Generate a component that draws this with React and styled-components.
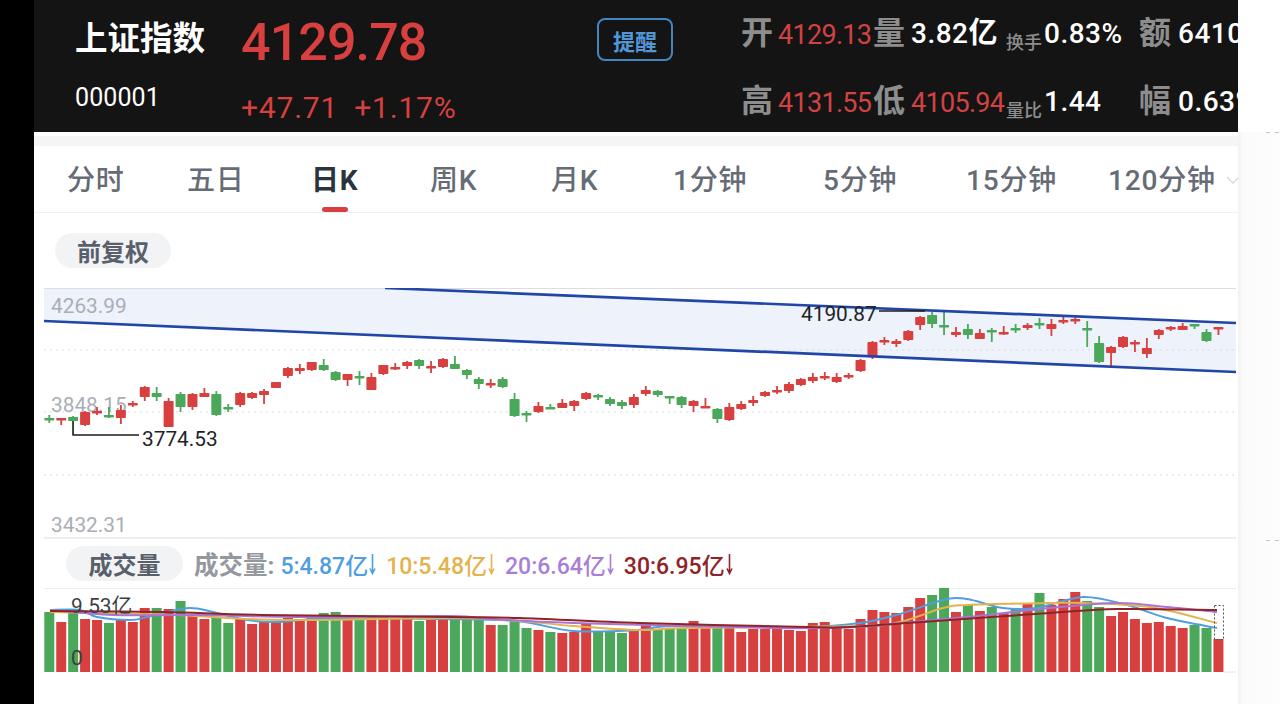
import React from "react";
import styled, { createGlobalStyle } from "styled-components";

const CJK = `Roboto, "Noto Sans CJK SC", sans-serif`;
const RED = "#d84040";
const GREEN = "#4ba75a";

const Global = createGlobalStyle`
  html, body { margin: 0; padding: 0; background: #000; }
  body { font-family: ${CJK}; }
  * { box-sizing: border-box; }
`;

const Page = styled.div`
  display: flex;
  width: 1280px;
  height: 704px;
  overflow: hidden;
`;
const LeftRail = styled.div`
  flex: 0 0 34px;
  background: #000;
`;
const Main = styled.main`
  flex: 0 0 1204px;
  background: #fff;
  display: flex;
  flex-direction: column;
  overflow: hidden;
`;
const RightStrip = styled.aside`
  flex: 0 0 42px;
  background: linear-gradient(90deg, #f1f1f1 0, #fbfbfb 5px, #fdfdfd 100%);
  display: flex;
  flex-direction: column;
  align-items: flex-end;
`;
const StripTop = styled.div`
  height: 132px;
  width: 100%;
  background: #fff;
  flex: none;
`;
const Dash = styled.div`
  width: 14px;
  height: 1px;
  flex: none;
  margin-top: ${(p) => p.$top}px;
  background: repeating-linear-gradient(90deg, #c4c4c4 0 4px, transparent 4px 9px);
`;

/* header */
const Header = styled.header`
  flex: 0 0 132px;
  background: #141414;
  display: flex;
  padding-left: 41px;
  white-space: nowrap;
  overflow: hidden;
`;
const NameBlock = styled.div`
  flex: 0 0 166px;
  color: #fff;
`;
const Name = styled.div`
  font-size: 32.5px;
  font-weight: 700;
  line-height: 40px;
  margin-top: 19px;
`;
const Code = styled.div`
  font-size: 25px;
  line-height: 30px;
  margin-top: 24px;
  letter-spacing: 0.1px;
`;
const PriceBlock = styled.div`
  flex: 0 0 356px;
  color: ${RED};
`;
const Price = styled.div`
  font-size: 52px;
  font-weight: 500;
  line-height: 60px;
  margin-top: 13px;
  letter-spacing: -0.9px;
`;
const Change = styled.div`
  display: flex;
  gap: 16px;
  font-size: 30px;
  line-height: 36px;
  margin-top: 17px;
  letter-spacing: 0.8px;
`;
const AlertButton = styled.button`
  flex: none;
  align-self: flex-start;
  width: 76px;
  height: 43px;
  margin-top: 18px;
  background: transparent;
  border: 2px solid #4586c0;
  border-radius: 8px;
  color: #4f97d8;
  font-family: ${CJK};
  font-size: 22px;
  font-weight: 700;
  padding: 0;
`;
const Stats = styled.div`
  margin-left: 68px;
  padding-top: 13px;
  display: grid;
  grid-template-columns: 37px 95px 38px 95px 38px 95px 39px 200px;
  grid-auto-rows: 40px;
  row-gap: 28px;
  align-items: center;
`;
const StatLabel = styled.span`
  font-size: 32px;
  font-weight: 700;
  color: #8d8d8d;
  line-height: 40px;
`;
const StatValue = styled.span`
  font-size: ${(p) => (p.$red ? 27 : 28)}px;
  line-height: 40px;
  font-weight: ${(p) => (p.$red ? 400 : 500)};
  letter-spacing: ${(p) => (p.$red ? -0.7 : 0.5)}px;
  color: ${(p) => (p.$red ? "#d14343" : "#fff")};
  margin-top: ${(p) => (p.$red ? 3 : 1)}px;
`;
const StatUnit = styled.span`
  font-size: 29px;
  font-weight: 700;
`;
const StatSmall = styled.span`
  font-size: 18px;
  font-weight: 500;
  color: #8d8d8d;
  line-height: 20px;
  align-self: end;
  margin-bottom: 0;
`;

/* tabs */
const Spacer = styled.div`
  flex: 0 0 14px;
  background: linear-gradient(#fff 0 4px, #f5f5f5 4px);
`;
const Tabs = styled.nav`
  flex: 0 0 67px;
  display: flex;
  padding-left: 33px;
  border-bottom: 1px solid #f1f1f1;
  white-space: nowrap;
  position: relative;
`;
const Tab = styled.div`
  flex: 0 0 ${(p) => p.$w}px;
  height: 66px;
  line-height: 69px;
  font-size: 28px;
  font-weight: ${(p) => (p.$active ? 700 : 500)};
  color: ${(p) => (p.$active ? "#2a333e" : "#666c76")};
  letter-spacing: 0.8px;
  position: relative;
`;
const Underline = styled.i`
  position: absolute;
  left: 11px;
  bottom: 0;
  width: 26px;
  height: 5px;
  border-radius: 3px;
  background: ${RED};
`;
const Chevron = styled.svg`
  position: absolute;
  left: 1192px;
  top: 29px;
`;

/* chip rows */
const ChipRow = styled.div`
  flex: 0 0 75px;
  display: flex;
  align-items: flex-start;
  padding: 20px 0 0 21px;
`;
const Chip = styled.div`
  display: flex;
  align-items: center;
  justify-content: center;
  height: 35px;
  width: ${(p) => p.$w}px;
  flex: none;
  border-radius: 18px;
  background: #f2f3f4;
  color: #59606b;
  font-size: ${(p) => p.$size}px;
  font-weight: 700;
`;
const ChartWrap = styled.div`
  margin-left: 10px;
  width: 1192px;
  flex: none;
  svg { display: block; }
`;
const Legend = styled.div`
  flex: 0 0 49px;
  display: flex;
  align-items: center;
  padding: 0 0 0 32px;
  white-space: nowrap;
`;
const LegendLabel = styled.span`
  margin-left: 11px;
  margin-right: 6px;
  font-size: 24.5px;
  font-weight: 700;
  color: #94989e;
`;
const LegendItem = styled.span`
  display: inline-flex;
  align-items: center;
  margin-right: 10px;
  font-size: 23px;
  font-weight: 500;
  color: ${(p) => p.$c};
`;
const AxisLabel = styled.text`
  font-family: ${CJK};
  font-size: 20.8px;
  fill: ${(p) => p.$c || "#a9aeb6"};
`;

const candles = [
  ["g",418,420,415,423],["r",418,420,418,425],["g",417,421,416,435],["r",412,425,411,426],["r",411,412,407,415],
  ["g",415,417,407,418],["r",410,418,405,424],["r",403,405,401,407],["r",387,397,386,401],["g",393,397,387,401],
  ["r",401,427,398,427],["g",394,407,392,412],["r",394,407,393,410],["r",393,397,388,397],["g",394,415,391,416],
  ["g",407,409,404,412],["r",393,405,392,407],["r",393,398,392,399],["r",391,395,389,404],["r",382,388,382,388],
  ["r",368,376,367,378],["r",368,371,364,374],["r",362,370,362,371],["g",365,370,359,371],["g",372,380,371,381],
  ["r",374,380,374,386],["g",376,378,371,385],["r",377,390,373,390],["r",365,374,365,375],["r",367,369,363,370],
  ["r",362,366,361,369],["g",360,366,359,369],["r",366,368,361,373],["r",359,367,358,368],["g",364,369,356,369],
  ["g",370,375,369,379],["g",379,384,377,389],["r",383,385,379,388],["g",379,387,377,388],["g",399,416,393,417],
  ["g",413,415,411,422],["r",406,412,402,413],["g",407,409,404,409],["r",403,408,399,408],["r",401,406,400,411],
  ["r",393,399,392,400],["g",395,397,394,400],["g",399,404,397,406],["g",402,406,400,409],["r",397,405,394,408],
  ["r",390,394,386,396],["g",391,395,390,397],["g",396,397,396,404],["g",397,405,396,408],["r",401,406,400,412],
  ["r",406,408,398,408],["g",409,419,408,423],["r",407,420,403,421],["r",404,409,401,410],["r",400,403,396,406],
  ["r",392,396,391,397],["r",390,392,386,394],["r",384,391,382,393],["r",379,385,378,386],["r",377,381,373,383],
  ["r",376,378,372,380],["r",377,382,373,383],["r",375,376,373,379],["r",360,371,359,372],["r",342,357,341,359],
  ["r",340,342,337,345],["r",341,344,339,347],["r",331,340,330,341],["r",317,325,316,330],["g",315,324,312,328],
  ["g",325,327,311,335],["r",332,335,327,337],["g",329,335,324,339],["r",333,339,329,339],["g",330,332,328,342],
  ["r",332,334,326,335],["g",328,330,324,333],["r",325,328,323,330],["g",323,325,318,329],["r",324,329,319,336],
  ["r",320,322,315,324],["r",319,320,315,324],["g",328,330,321,347],["g",343,362,336,363],["r",347,353,346,366],
  ["r",337,347,336,348],["r",342,344,340,352],["r",348,354,338,358],["r",330,335,329,339],["r",327,329,326,331],
  ["r",326,330,323,330],["g",324,326,324,329],["g",332,341,329,342],["r",327,328,327,335],
];

const volumeTops = [
  612,622,612,619,620,623,619,622,608,608,609,601,614,619,618,623,619,624,622,622,618,620,617,613,612,618,618,617,617,619,
  617,621,620,619,619,619,619,625,625,621,628,630,632,633,632,624,632,631,633,630,624,629,629,628,621,628,628,628,632,629,
  629,629,630,631,623,622,627,629,619,610,612,613,607,598,595,588,612,605,611,607,613,608,604,593,605,599,592,601,607,616,
  612,619,623,622,626,628,625,628,639,
];

const barX = (i) => 49.3 + i * 11.93;

const smooth = (pts) => {
  let d = `M${pts[0][0]} ${pts[0][1]}`;
  for (let i = 0; i < pts.length - 1; i++) {
    const p0 = pts[i - 1] || pts[i];
    const p1 = pts[i];
    const p2 = pts[i + 1];
    const p3 = pts[i + 2] || p2;
    const c1x = p1[0] + (p2[0] - p0[0]) / 6;
    const c1y = p1[1] + (p2[1] - p0[1]) / 6;
    const c2x = p2[0] - (p3[0] - p1[0]) / 6;
    const c2y = p2[1] - (p3[1] - p1[1]) / 6;
    d += ` C${c1x} ${c1y} ${c2x} ${c2y} ${p2[0]} ${p2[1]}`;
  }
  return d;
};

const maLines = [
  { c: "#4f9fdf", pts: [[50,610],[80,610],[97,617],[130,620],[147,617],[163,613],[190,608],[213,612],[247,620],[280,622],[330,618],[440,619],[517,621],[573,631],[640,630],[673,626],[807,627],[860,623],[900,614],[943,600],[967,599],[1003,608],[1037,608],[1083,597],[1127,605],[1167,618],[1217,628]] },
  { c: "#e3b34d", pts: [[50,612],[97,613],[177,615],[283,620],[450,618],[520,621],[573,626],[640,630],[687,628],[860,626],[900,622],[943,608],[967,605],[1050,603],[1083,603],[1150,607],[1217,623]] },
  { c: "#a875d4", pts: [[50,610],[113,615],[197,615],[297,617],[450,616],[490,619],[573,623],[773,628],[860,627],[900,623],[967,617],[1050,608],[1117,603],[1167,607],[1217,612]] },
  { c: "#8f2327", pts: [[50,611],[163,612],[263,615],[450,617],[520,618],[640,623],[807,627],[850,627],[950,620],[1050,613],[1117,609],[1217,610]] },
];

const legend = [
  ["5:4.87亿", "#4f9fdf"],
  ["10:5.48亿", "#e3b34d"],
  ["20:6.64亿", "#a97fd6"],
  ["30:6.95亿", "#8f2327"],
];

const tabs = [
  ["分时", 120], ["五日", 124], ["日K", 119, true], ["周K", 121], ["月K", 122],
  ["1分钟", 150], ["5分钟", 143], ["15分钟", 142], ["120分钟", 130],
];

const DownArrow = ({ c }) => (
  <svg width="7" height="22" viewBox="0 0 7 22" style={{ marginLeft: 1 }}>
    <path d="M3.5 1V20M1 15.5L3.5 20.5L6 15.5" fill="none" stroke={c} strokeWidth="1.6" />
  </svg>
);

const KChart = () => (
  <svg width="1192" height="251" viewBox="44 288 1192 251">
    <polygon points="44,288 385,288 1236,323 1236,372 44,321" fill="#edf2fb" />
    <line x1="44" y1="288.5" x2="1236" y2="288.5" stroke="#dcdde0" />
    {[350, 412, 475].map((y) => (
      <line key={y} x1="44" y1={y} x2="1236" y2={y} stroke="#dcdcdc" strokeDasharray="2 4" />
    ))}
    <line x1="44" y1="538" x2="1236" y2="538" stroke="#dcdde0" />
    <AxisLabel x="51" y="313">4263.99</AxisLabel>
    <AxisLabel x="51" y="412">3848.15</AxisLabel>
    <AxisLabel x="51" y="532">3432.31</AxisLabel>
    {candles.map(([t, bt, bb, wt, wb], i) => {
      const c = t === "r" ? RED : GREEN;
      const x = barX(i);
      return (
        <g key={i} fill={c}>
          <rect x={x - 0.9} y={wt} width="1.8" height={wb - wt} />
          <rect x={x - 5} y={bt} width="10" height={Math.max(bb - bt, 2.5)} rx="0.8" />
        </g>
      );
    })}
    <line x1="385" y1="288" x2="1236" y2="323" stroke="#2246a8" strokeWidth="2.7" />
    <line x1="44" y1="321" x2="1236" y2="372" stroke="#2246a8" strokeWidth="2.7" />
    <path d="M73 421V435H139" fill="none" stroke="#1c1c1c" strokeWidth="1.3" />
    <path d="M879 311H925" fill="none" stroke="#1c1c1c" strokeWidth="1.3" />
    <AxisLabel x="142" y="446" $c="#1f2329">3774.53</AxisLabel>
    <AxisLabel x="801" y="321" $c="#1f2329">4190.87</AxisLabel>
  </svg>
);

const VolumeChart = () => (
  <svg width="1192" height="85" viewBox="44 588 1192 85">
    <line x1="44" y1="588" x2="1236" y2="588" stroke="#dcdde0" />
    {volumeTops.map((top, i) => (
      <rect
        key={i}
        x={barX(i) - 5}
        y={top}
        width="10"
        height={672 - top}
        fill={candles[i][0] === "r" ? RED : GREEN}
      />
    ))}
    {maLines.map((m) => (
      <path key={m.c} d={smooth(m.pts)} fill="none" stroke={m.c} strokeWidth="2" />
    ))}
    <rect x="1214.5" y="605.5" width="9" height="34" fill="none" stroke="#555" strokeDasharray="2 2" />
    <line x1="1224" y1="672" x2="1236" y2="672" stroke="#e4e4e4" />
    <AxisLabel x="71" y="613" $c="#3b3f44">9.53亿</AxisLabel>
    <AxisLabel x="71" y="665" $c="#3b3f44">0</AxisLabel>
  </svg>
);

export default function App() {
  return (
    <Page>
      <Global />
      <LeftRail />
      <Main>
        <Header>
          <NameBlock>
            <Name>上证指数</Name>
            <Code>000001</Code>
          </NameBlock>
          <PriceBlock>
            <Price>4129.78</Price>
            <Change>
              <span>+47.71</span>
              <span>+1.17%</span>
            </Change>
          </PriceBlock>
          <AlertButton>提醒</AlertButton>
          <Stats>
            <StatLabel>开</StatLabel>
            <StatValue $red>4129.13</StatValue>
            <StatLabel>量</StatLabel>
            <StatValue>3.82<StatUnit>亿</StatUnit></StatValue>
            <StatSmall>换手</StatSmall>
            <StatValue>0.83%</StatValue>
            <StatLabel>额</StatLabel>
            <StatValue>6410亿</StatValue>
            <StatLabel>高</StatLabel>
            <StatValue $red>4131.55</StatValue>
            <StatLabel>低</StatLabel>
            <StatValue $red>4105.94</StatValue>
            <StatSmall>量比</StatSmall>
            <StatValue>1.44</StatValue>
            <StatLabel>幅</StatLabel>
            <StatValue>0.63%</StatValue>
          </Stats>
        </Header>
        <Spacer />
        <Tabs>
          {tabs.map(([t, w, active]) => (
            <Tab key={t} $w={w} $active={active}>
              {t}
              {active && <Underline />}
            </Tab>
          ))}
          <Chevron width="14" height="10" viewBox="0 0 14 10">
            <path d="M1 2L7 8L13 2" fill="none" stroke="#d9dbde" strokeWidth="1.5" />
          </Chevron>
        </Tabs>
        <ChipRow>
          <Chip $w={116} $size={24}>前复权</Chip>
        </ChipRow>
        <ChartWrap>
          <KChart />
        </ChartWrap>
        <Legend>
          <Chip $w={117} $size={24}>成交量</Chip>
          <LegendLabel>成交量:</LegendLabel>
          {legend.map(([t, c]) => (
            <LegendItem key={t} $c={c}>
              {t}
              <DownArrow c={c} />
            </LegendItem>
          ))}
        </Legend>
        <ChartWrap>
          <VolumeChart />
        </ChartWrap>
      </Main>
      <RightStrip>
        <StripTop />
        <Dash $top={0} />
        <Dash $top={407} />
      </RightStrip>
    </Page>
  );
}
